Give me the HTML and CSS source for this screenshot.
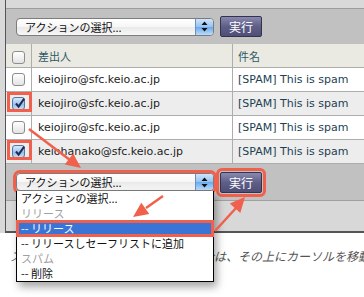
FILE: index.html
```html
<!DOCTYPE html>
<html lang="ja">
<head>
    <meta charset="UTF-8">
    <title>スパム一覧</title>
    <link rel="stylesheet" href="styles.css">
</head>
<body>

<div class="frame">
    <div class="panel">
        <div class="panel-inner">
            <!-- top action bar -->
            <div class="bar">
                <div class="select">
                    <span class="select-label">アクションの選択...</span>
                    <span class="select-arrows">
                        <svg width="7" height="11" viewBox="0 0 7 11"><path d="M3.5 0.5 L6.5 4 L0.5 4 Z M0.5 7 L6.5 7 L3.5 10.5 Z" fill="#111"/></svg>
                    </span>
                </div>
                <button class="run">実行</button>
            </div>

            <table class="list">
                <tr class="head">
                    <th class="chk"><span class="cb"></span></th>
                    <th class="from">差出人</th>
                    <th class="subj">件名</th>
                </tr>
                <tr>
                    <td class="chk"><span class="cb"></span></td>
                    <td class="from">keiojiro@sfc.keio.ac.jp</td>
                    <td class="subj">[SPAM] This is spam</td>
                </tr>
                <tr class="alt">
                    <td class="chk marked"><span class="cb on"><svg width="13" height="13" viewBox="0 0 13 13"><path d="M3 6.5 L5.6 9.6 L11.2 1.6" fill="none" stroke="#1b2b55" stroke-width="2"/></svg></span></td>
                    <td class="from">keiojiro@sfc.keio.ac.jp</td>
                    <td class="subj">[SPAM] This is spam</td>
                </tr>
                <tr>
                    <td class="chk"><span class="cb"></span></td>
                    <td class="from">keiojiro@sfc.keio.ac.jp</td>
                    <td class="subj">[SPAM] This is spam</td>
                </tr>
                <tr class="alt">
                    <td class="chk marked"><span class="cb on"><svg width="13" height="13" viewBox="0 0 13 13"><path d="M3 6.5 L5.6 9.6 L11.2 1.6" fill="none" stroke="#1b2b55" stroke-width="2"/></svg></span></td>
                    <td class="from">keiohanako@sfc.keio.ac.jp</td>
                    <td class="subj">[SPAM] This is spam</td>
                </tr>
            </table>

            <!-- bottom action bar, with the menu open -->
            <div class="bar bar-bottom">
                <div class="select red">
                    <span class="select-label">アクションの選択...</span>
                    <span class="select-arrows">
                        <svg width="7" height="11" viewBox="0 0 7 11"><path d="M3.5 0.5 L6.5 4 L0.5 4 Z M0.5 7 L6.5 7 L3.5 10.5 Z" fill="#111"/></svg>
                    </span>
                </div>
                <button class="run red-btn">実行</button>

                <ul class="menu">
                    <li>アクションの選択...</li>
                    <li class="group">リリース</li>
                    <li class="picked">-- リリース</li>
                    <li>-- リリースしセーフリストに追加</li>
                    <li class="group">スパム</li>
                    <li>-- 削除</li>
                </ul>
            </div>
            <div class="panel-foot"></div>
        </div>
    </div>
</div>

<p class="note">スパムメールの内容を確認したい場合は、その上にカーソルを移動してください。</p>

<!-- annotation arrows -->
<svg class="arrows" width="364" height="297" viewBox="0 0 364 297">
    <g stroke="#f0604c" stroke-width="2.5" fill="#f0604c">
        <line x1="29" y1="129" x2="70" y2="160"/>
        <polygon points="81,168 64.8,164.6 73.2,153.4" stroke="none"/>
        <line x1="163" y1="196" x2="146" y2="208"/>
        <polygon points="133,217 141.3,202.7 149.3,214.1" stroke="none"/>
        <line x1="215" y1="231" x2="236" y2="208"/>
        <polygon points="245,197 240.3,212.9 229.8,203.6" stroke="none"/>
    </g>
</svg>

</body>
</html>
```

FILE: styles.css
```css
body {
    margin: 0;
    background: #fff;
    font-family: "DejaVu Sans", "Noto Sans CJK JP", sans-serif;
    font-size: 11px;
    position: relative;
    height: 297px;
    overflow: hidden;
}
.frame {
    background: #d9d9d9;
    padding-left: 5px;
}
.panel {
    border-left: 1px solid #555;
    border-bottom: 2px solid #555;
    padding-top: 8px;
}
.panel-inner {
    border-top: 1px solid #9c9c9c;
    background: #c1c1c1;
}
.bar {
    display: flex;
    align-items: center;
    gap: 6px;
    height: 35px;
    padding-left: 10px;
    box-sizing: border-box;
}
.bar-bottom {
    position: relative;
    height: 37px;
    border-bottom: 1px solid #9f9f9f;
}
.panel-foot {
    height: 30px;
    background: #d8d8d8;
}

/* mac style popup */
.select {
    width: 198px;
    height: 18px;
    box-sizing: border-box;
    border: 1px solid #7c7c7c;
    border-radius: 4px;
    background: linear-gradient(#ffffff, #f6f6f6 50%, #e9e9e9 51%, #f7f7f7);
    display: flex;
    align-items: center;
    overflow: hidden;
    font-family: "Noto Sans CJK JP", sans-serif;
    font-size: 11px;
    color: #111;
}
.select-label {
    padding-left: 8px;
}
.select-arrows {
    margin-left: auto;
    width: 17px;
    height: 100%;
    border-left: 1px solid #6d8fb8;
    background: linear-gradient(#cfe4fa, #94c2f2 50%, #6aa8ec 51%, #bcdcfc);
    display: flex;
    align-items: center;
    justify-content: center;
}
.run {
    width: 42px;
    height: 21px;
    padding: 0;
    border: 1px solid #33334e;
    border-radius: 2px;
    background: linear-gradient(#8888b0, #5e5e87 50%, #4e4e76);
    color: #fff;
    font-family: "Noto Sans CJK JP", sans-serif;
    font-size: 12px;
}
.red {
    outline: 3px solid #f0604c;
}
.red-btn {
    outline: 3px solid #f0604c;
    outline-offset: 1px;
}

/* table */
.list {
    width: 100%;
    border-collapse: collapse;
}
.list th, .list td {
    height: 23px;
    padding: 0;
    border-bottom: 1px solid #adadad;
    text-align: left;
    font-weight: normal;
    background: #fff;
}
.list .alt td {
    background: #ededed;
}
.list .head th {
    background: #ebeae2;
    color: #2d5866;
    font-family: "Noto Sans CJK JP", sans-serif;
}
.chk {
    width: 25px;
    text-align: center !important;
    border-right: 1px solid #adadad;
    position: relative;
}
.from {
    width: 194px;
    padding-left: 6px !important;
    border-right: 1px solid #adadad;
    color: #1d1d1d;
}
.subj {
    padding-left: 5px !important;
    color: #1d3f52;
}
.cb {
    display: inline-block;
    vertical-align: middle;
    width: 11px;
    height: 11px;
    border: 1px solid #8d8d8d;
    border-radius: 3px;
    background: linear-gradient(#ffffff, #e3e3e3);
    position: relative;
}
.cb.on {
    border-color: #56789f;
    background: linear-gradient(#d8e9fb, #a2c7ef 50%, #8cb9ea 51%, #c1ddf8);
}
.cb svg {
    position: absolute;
    left: 0;
    top: -1px;
}
.marked::after {
    content: '';
    position: absolute;
    left: 1px;
    top: 0;
    width: 19px;
    height: 14px;
    border: 3px solid #f0604c;
}

/* open popup list */
.menu {
    position: absolute;
    left: 10px;
    top: 27px;
    width: 198px;
    box-sizing: border-box;
    margin: 0;
    padding: 0;
    list-style: none;
    background: #fff;
    border: 1px solid #000;
    border-top: none;
    box-shadow: 3px 5px 8px rgba(0,0,0,0.35);
    font-family: "Noto Sans CJK JP", sans-serif;
    font-size: 11px;
    line-height: 15px;
    color: #111;
    z-index: 2;
}
.menu li {
    padding-left: 4px;
    white-space: nowrap;
}
.menu .group {
    color: #a0a0a0;
}
.menu .picked {
    background: #3a75d6;
    color: #fff;
    outline: 3px solid #f0604c;
    outline-offset: -2px;
}

.note {
    margin: 15px 0 0;
    padding-left: 10px;
    font-family: "Noto Sans CJK JP", sans-serif;
    font-size: 12px;
    font-style: italic;
    line-height: 15px;
    color: #555;
    white-space: nowrap;
}
.arrows {
    position: absolute;
    left: 0;
    top: 0;
    z-index: 3;
    pointer-events: none;
}
```
